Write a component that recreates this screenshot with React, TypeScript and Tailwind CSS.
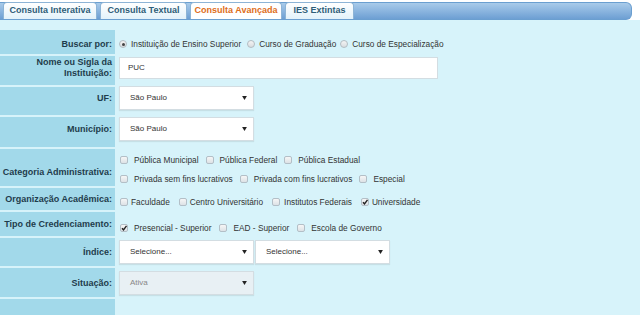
import React from "react"

const tabs = [
  { name: "Consulta Interativa", w: "w-[94px]" },
  { name: "Consulta Textual", w: "w-[87px]" },
  { name: "Consulta Avançada", w: "w-[92px]", active: true },
  { name: "IES Extintas", w: "w-[69px]" },
]

function Radio({ checked }: { checked?: boolean }) {
  return (
    <span className="inline-flex items-center justify-center w-[8px] h-[8px] rounded-full border border-[#b3bcc2] bg-gradient-to-b from-[#f4f4f4] to-[#d9dde0] shrink-0">
      {checked && <span className="w-[3px] h-[3px] rounded-full bg-[#444]" />}
    </span>
  )
}

function Check({ checked }: { checked?: boolean }) {
  return (
    <span className="relative inline-block w-[8px] h-[8px] rounded-[2px] border border-[#b3bfc7] bg-gradient-to-b from-[#f6f6f6] to-[#dde2e6] shrink-0">
      {checked && (
        <svg viewBox="0 0 8 8" className="absolute left-[-1px] top-[-1px] w-[8px] h-[8px]">
          <path d="M2 4.2 L3.5 5.8 L6.5 1.8" stroke="#222" strokeWidth="1.4" fill="none" />
        </svg>
      )}
    </span>
  )
}

function Opt({ label, checked, gap = "ml-[6px]", mr = "mr-[7px]" }: { label: string; checked?: boolean; gap?: string; mr?: string }) {
  return (
    <span className={`inline-flex items-center ${mr}`}>
      <Check checked={checked} />
      <span className={gap}>{label}</span>
    </span>
  )
}

function Select({ value, w = "w-[135px]", disabled }: { value: string; w?: string; disabled?: boolean }) {
  return (
    <div
      className={`${w} h-[24px] flex items-center justify-between pl-[10px] pr-[6px] text-[8px] border border-[#d3dde2] shadow-[0_1px_1px_rgba(0,0,0,0.08)] ${
        disabled ? "bg-[#e8f0f4] text-[#888]" : "bg-white text-[#333]"
      }`}
    >
      <span>{value}</span>
      <svg viewBox="0 0 6 5" className="w-[5px] h-[4px]">
        <path d="M0 0 L6 0 L3 5 Z" fill="#222" />
      </svg>
    </div>
  )
}

function Row({
  label,
  h,
  lp = "pt-[1px]",
  cp = "",
  children,
}: {
  label: React.ReactNode
  h: string
  lp?: string
  cp?: string
  children?: React.ReactNode
}) {
  return (
    <div className={`flex ${h}`}>
      <div className={`w-[115px] shrink-0 bg-[#a2d9ea] flex items-center justify-end text-right pr-[3px] font-bold text-[9px] text-[#1f3c4c] leading-[11px] ${lp}`}>
        {label}
      </div>
      <div className={`flex-1 flex items-center pl-[4px] ${cp}`}>{children}</div>
    </div>
  )
}

export default function App() {
  return (
    <div className="w-[640px] h-[315px] overflow-hidden bg-white font-['Liberation_Sans',Arial,sans-serif] text-[8.3px] text-[#333] flex flex-col">
      {/* TAB BAR */}
      <div className="h-[20px] pt-[2px] pr-[8px] shrink-0">
        <div className="h-[18px] rounded-r-[6px] border border-l-0 border-[#6b9fd0] bg-gradient-to-b from-[#a9cbea] to-[#6d9fd3] flex items-end gap-[3px] pl-[3px]">
          {tabs.map((t) => (
            <div
              key={t.name}
              className={`${t.w} h-[17px] rounded-t-[4px] border border-b-0 border-[#8db4d6] flex items-center justify-center font-bold text-[9px] ${
                t.active ? "bg-white text-[#de6d20]" : "bg-gradient-to-b from-white to-[#e3f2fa] text-[#2e5d78]"
              }`}
            >
              {t.name}
            </div>
          ))}
        </div>
      </div>

      {/* FORM */}
      <div className="flex-1 bg-[#d7f3fa] pt-[10px] flex flex-col gap-[2px]">
        <Row label="Buscar por:" h="h-[24px]" lp="pt-[5px]" cp="pt-[4px]">
          <span className="inline-flex items-center gap-[4px]">
            <Radio checked />
            <span>Instituição de Ensino Superior</span>
          </span>
          <span className="inline-flex items-center gap-[4px] ml-[6px]">
            <Radio />
            <span>Curso de Graduação</span>
          </span>
          <span className="inline-flex items-center gap-[4px] ml-[4px]">
            <Radio />
            <span>Curso de Especialização</span>
          </span>
        </Row>
        <Row
          label={
            <span>
              Nome ou Sigla da
              <br />
              Instituição:
            </span>
          }
          h="h-[29px]"
          lp="pb-[6px]"
          cp="pb-[6px]"
        >
          <div className="w-[319px] h-[22px] bg-white border border-[#d3dde2] flex items-center pl-[8px] text-[8px] text-[#333]">
            PUC
          </div>
        </Row>
        <Row label="UF:" h="h-[28px]" lp="pb-[5px]" cp="pb-[6px]">
          <Select value="São Paulo" />
        </Row>
        <Row label="Município:" h="h-[30px]" lp="pb-[5px]" cp="pb-[6px]">
          <Select value="São Paulo" />
        </Row>
        <Row label="Categoria Administrativa:" h="h-[37px]" lp="pt-[10px]" cp="pt-[4px]">
          <div className="flex flex-col gap-[6px] pl-[1px]">
            <div className="flex items-center">
              <Opt label="Pública Municipal" />
              <Opt label="Pública Federal" />
              <Opt label="Pública Estadual" />
            </div>
            <div className="flex items-center">
              <Opt label="Privada sem fins lucrativos" />
              <Opt label="Privada com fins lucrativos" />
              <Opt label="Especial" />
            </div>
          </div>
        </Row>
        <Row label="Organização Acadêmica:" h="h-[22px]" cp="pt-[6px]">
          <div className="flex items-center pl-[1px]">
            <Opt label="Faculdade" gap="ml-[3px]" mr="mr-[9px]" />
            <Opt label="Centro Universitário" gap="ml-[3px]" mr="mr-[9px]" />
            <Opt label="Institutos Federais" gap="ml-[4px]" mr="mr-[9px]" />
            <Opt label="Universidade" checked gap="ml-[3px]" />
          </div>
        </Row>
        <Row label="Tipo de Credenciamento:" h="h-[24px]" cp="pt-[8px]">
          <div className="flex items-center pl-[1px]">
            <Opt label="Presencial - Superior" checked mr="mr-[8px]" />
            <Opt label="EAD - Superior" mr="mr-[8px]" />
            <Opt label="Escola de Governo" />
          </div>
        </Row>
        <Row label="Índice:" h="h-[28px]">
          <Select value="Selecione..." w="w-[135px]" />
          <Select value="Selecione..." w="w-[135px] ml-[1px]" />
        </Row>
        <Row label="Situação:" h="h-[29px]">
          <Select value="Ativa" disabled />
        </Row>
        <Row label="" h="h-[30px]" />
      </div>
    </div>
  )
}
